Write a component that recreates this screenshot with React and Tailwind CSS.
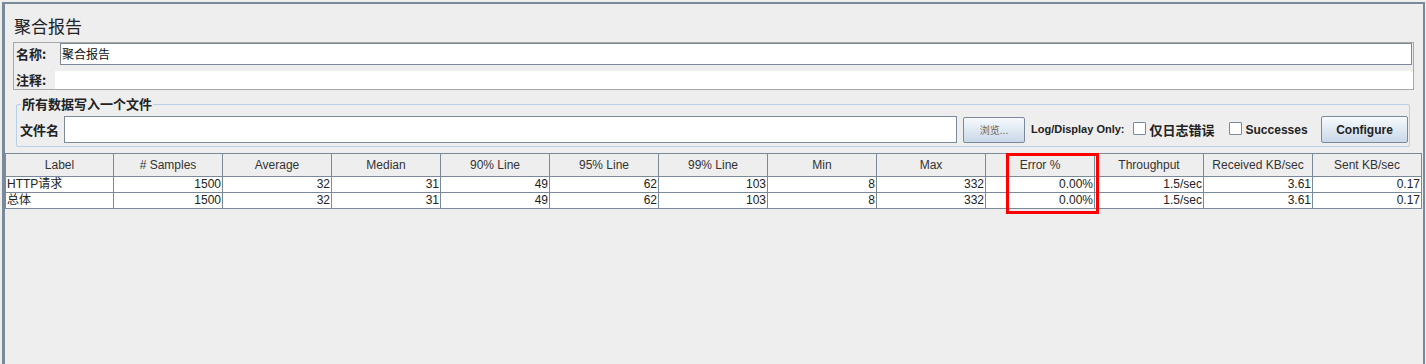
import React from 'react';

const COLUMNS = ['Label', '# Samples', 'Average', 'Median', '90% Line', '95% Line', '99% Line', 'Min', 'Max', 'Error %', 'Throughput', 'Received KB/sec', 'Sent KB/sec'];

const ROWS = [
  ['HTTP请求', '1500', '32', '31', '49', '62', '103', '8', '332', '0.00%', '1.5/sec', '3.61', '0.17'],
  ['总体', '1500', '32', '31', '49', '62', '103', '8', '332', '0.00%', '1.5/sec', '3.61', '0.17'],
];

function Checkbox() {
  return <span className="inline-block w-[13px] h-[13px] bg-white border border-[#7b8a9a] rounded-[1px] shrink-0" />;
}

export default function App() {
  return (
    <div className="w-[1426px] h-[364px] bg-[#eeeeee] pt-[2px] pl-[2px] overflow-hidden text-[#333] font-['Liberation_Sans','Noto_Sans_CJK_SC',sans-serif]">
      <div className="w-[1423px] h-[362px] border-l-[3px] border-t-2 border-r-2 border-[#7b8a9a] flex flex-col">
        {/* title */}
        <div className="h-[38px] pl-[9px] pt-[11px] text-[17px] leading-[22px] text-[#222] font-['Noto_Sans_CJK_SC',sans-serif]">聚合报告</div>

        {/* name / comments */}
        <div className="ml-[8px] w-[1401px] h-[48px] border border-[#a8a8a8] flex flex-col">
          <div className="h-[22px] flex items-center">
            <span className="w-[46px] pl-[2px] text-[13px] font-bold text-[#222] font-['Noto_Sans_CJK_SC',sans-serif]">名称:</span>
            <div className="flex-1 mr-[1px] h-[22px] bg-white border border-[#7b8a9a] flex items-center pl-[1px] text-[12px] text-[#111] font-['Noto_Sans_CJK_SC',sans-serif]">聚合报告</div>
          </div>
          <div className="h-[6px]" />
          <div className="h-[18px] flex items-center">
            <span className="w-[41px] pl-[2px] text-[13px] font-bold text-[#222] font-['Noto_Sans_CJK_SC',sans-serif]">注释:</span>
            <div className="flex-1 h-[18px] bg-white" />
          </div>
        </div>

        {/* write all data to file */}
        <fieldset className="ml-[11px] mt-[6px] w-[1394px] border border-[#b8cfe5] rounded-[2px] px-[1px] pb-[3px]">
          <legend className="ml-[3px] px-[1px] text-[13px] leading-[16px] font-bold text-[#222] font-['Noto_Sans_CJK_SC',sans-serif]">所有数据写入一个文件</legend>
          <div className="flex items-center pt-[4px]">
            <span className="w-[46px] pl-[2px] text-[13px] font-bold text-[#222] font-['Noto_Sans_CJK_SC',sans-serif]">文件名</span>
            <div className="w-[893px] h-[27px] bg-white border border-[#7b8a9a]" />
            <button className="ml-[6px] w-[62px] h-[26px] border border-[#7b8a9a] rounded-[2px] bg-gradient-to-b from-[#f7fafd] to-[#c9d8e8] text-[10px] text-[#666] font-['Noto_Sans_CJK_SC',sans-serif]">浏览...</button>
            <span className="ml-[6px] text-[11px] font-bold text-[#222] whitespace-nowrap">Log/Display Only:</span>
            <span className="ml-[8px]"><Checkbox /></span>
            <span className="ml-[4px] text-[13px] font-bold text-[#222] font-['Noto_Sans_CJK_SC',sans-serif]">仅日志错误</span>
            <span className="ml-[14px]"><Checkbox /></span>
            <span className="ml-[4px] text-[12px] font-bold text-[#222]">Successes</span>
            <button className="ml-auto w-[87px] h-[27px] border border-[#7b8a9a] rounded-[2px] bg-gradient-to-b from-[#f7fafd] to-[#c9d8e8] text-[12px] font-bold text-[#222]">Configure</button>
          </div>
        </fieldset>

        {/* results table */}
        <div className="relative mt-[6px]">
          <div className="grid grid-cols-[108px_repeat(12,109px)] border-l border-t border-[#7b8a9a] w-[1417px]">
            {COLUMNS.map(col => (
              <div key={col} className="h-[23px] bg-[#eeeeee] border-r border-b border-[#7b8a9a] flex items-center justify-center text-[12px] text-[#333] whitespace-nowrap">{col}</div>
            ))}
            {ROWS.map((row, r) => row.map((cell, i) => (
              <div key={r + '-' + i}
                className={`h-[16px] bg-white border-r border-b border-[#7b8a9a] flex items-center text-[12px] leading-[15px] text-[#222] whitespace-nowrap ${i === 0 ? "justify-start pl-[1px] font-['Liberation_Sans','Noto_Sans_CJK_SC',sans-serif]" : 'justify-end pr-[1px]'}`}>
                {cell}
              </div>
            )))}
          </div>
          <div className="absolute left-[1001px] top-0 w-[93px] h-[61px] border-[3px] border-[#ff0000] pointer-events-none" />
        </div>
      </div>
    </div>
  );
}
